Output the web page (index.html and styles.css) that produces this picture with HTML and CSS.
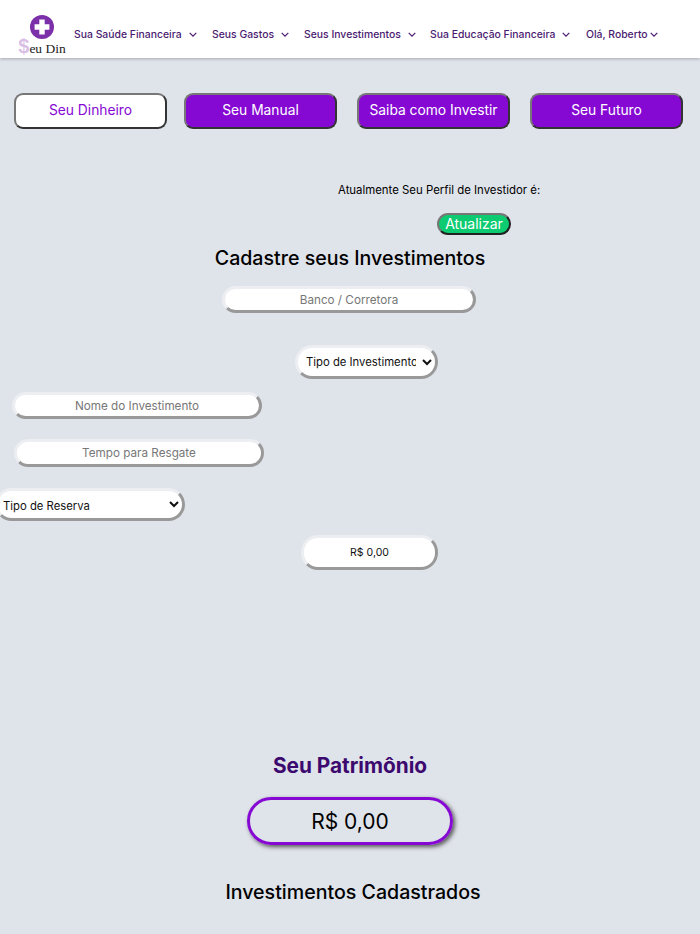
FILE: index.html

```html
<!DOCTYPE html>
<html lang="pt-BR">
<head>
  <meta charset="UTF-8">
  <title>Seu Din - Seus Investimentos</title>
  <link rel="stylesheet" href="styles.css">
</head>
<body>

<header class="topbar">
  <a class="logo" href="#">
    <svg class="logo-icon" viewBox="0 0 24 24" width="24" height="24">
      <circle cx="12" cy="12" r="12" fill="#7b2fa8"/>
      <path d="M9.3 4.6h5.4v4.7h4.7v5.4h-4.700v4.700H9.300v-4.700H4.600V9.300h4.700z" fill="#fff"/>
    </svg>
    <span class="logo-text"><span class="logo-cifrao">$</span>eu Din</span>
  </a>
  <nav class="menu">
    <a href="#" class="menu-item item-saude">Sua Saúde Financeira
      <svg class="chevron" viewBox="0 0 8 5"><path d="M.7.8 4 4.100 7.300.8"/></svg></a>
    <a href="#" class="menu-item item-gastos">Seus Gastos
      <svg class="chevron" viewBox="0 0 8 5"><path d="M.7.8 4 4.100 7.300.8"/></svg></a>
    <a href="#" class="menu-item item-invest">Seus Investimentos
      <svg class="chevron" viewBox="0 0 8 5"><path d="M.7.8 4 4.100 7.300.8"/></svg></a>
    <a href="#" class="menu-item item-edu">Sua Educação Financeira
      <svg class="chevron" viewBox="0 0 8 5"><path d="M.7.8 4 4.100 7.300.8"/></svg></a>
    <a href="#" class="menu-item item-user">Olá, Roberto
      <svg class="chevron" viewBox="0 0 8 5"><path d="M.7.8 4 4.100 7.300.8"/></svg></a>
  </nav>
</header>

<div class="tabs">
  <a href="#" class="tab tab-active">Seu Dinheiro</a>
  <a href="#" class="tab">Seu Manual</a>
  <a href="#" class="tab">Saiba como Investir</a>
  <a href="#" class="tab">Seu Futuro</a>
</div>

<p class="perfil">Atualmente Seu Perfil de Investidor é:</p>
<button class="btn-atualizar" type="button">Atualizar</button>

<h2 class="titulo">Cadastre seus Investimentos</h2>

<form class="cadastro">
  <input class="campo campo-banco" type="text" placeholder="Banco / Corretora">
  <select class="campo campo-tipo">
    <option>Tipo de Investimento</option>
  </select>
  <input class="campo campo-nome" type="text" placeholder="Nome do Investimento">
  <input class="campo campo-tempo" type="text" placeholder="Tempo para Resgate">
  <select class="campo campo-reserva">
    <option>Tipo de Reserva</option>
  </select>
  <input class="campo campo-valor" type="text" value="R$ 0,00">
</form>

<h2 class="patrimonio-titulo">Seu Patrimônio</h2>
<div class="patrimonio-valor">R$ 0,00</div>

<h2 class="titulo titulo-lista">Investimentos Cadastrados</h2>

</body>
</html>
```

FILE: styles.css

```css
body {
  margin: 0;
  height: 934px;
  overflow: hidden;
  background-color: #dfe3ea;
  font-family: Inter, "Noto Sans", sans-serif;
  color: #000;
}

/* topo */
.topbar {
  height: 58px;
  background-color: #fff;
  box-shadow: 0 1px 3px rgba(0,0,0,0.25);
  display: flex;
}
.logo {
  width: 74px;
  padding-top: 15px;
  box-sizing: border-box;
  display: flex;
  flex-direction: column;
  align-items: center;
  text-decoration: none;
}
.logo-icon { margin-left: 10px; flex: none; }
.logo-text {
  margin-left: 10px;
  margin-top: -2px;
  font-family: "Liberation Serif", serif;
  font-size: 13.5px;
  line-height: 19px;
  color: #222;
  white-space: nowrap;
}
.logo-cifrao {
  font-family: "Liberation Sans", sans-serif;
  font-weight: bold;
  font-size: 20px;
  color: #d9bfe6;
}
.menu {
  display: flex;
  align-items: center;
  padding-top: 10px;
  height: 48px;
}
.menu-item {
  display: flex;
  align-items: center;
  font-size: 10.4px;
  font-weight: 500;
  color: #4a1a70;
  text-decoration: none;
  white-space: nowrap;
}
.chevron {
  width: 8px;
  height: 5px;
  fill: none;
  stroke: #4a1a70;
  stroke-width: 1.2;
  margin-left: 7px;
}
.item-saude { width: 138px; }
.item-gastos { width: 92px; }
.item-invest { width: 126px; }
.item-edu { width: 156px; }
.item-user .chevron { margin-left: 2px; }

/* abas */
.tabs {
  display: flex;
  gap: 20px;
  padding: 35px 0 0 14px;
}
.tab {
  width: 153px;
  height: 36px;
  box-sizing: border-box;
  padding-bottom: 2px;
  display: flex;
  align-items: center;
  justify-content: center;
  background-color: #8609d3;
  color: #fff;
  font-size: 13.8px;
  text-decoration: none;
  border-radius: 9px;
  border: 2px solid;
  border-color: #777 #333 #333 #777;
  white-space: nowrap;
}
.tab-active {
  background-color: #fff;
  color: #8609d3;
  margin-right: -3px;
}

/* perfil */
.perfil {
  margin: 53px 0 0 338px;
  font-size: 11.4px;
  line-height: 16px;
}
.btn-atualizar {
  display: block;
  margin: 15px 0 0 437px;
  width: 74px;
  height: 22px;
  padding: 0 0 2px;
  background-color: #0ccb70;
  color: #fff;
  font-family: inherit;
  font-size: 14px;
  border-radius: 11px;
  border: 2px solid;
  border-color: #777 #222 #222 #777;
}

.titulo {
  margin: 10px 0 0;
  text-align: center;
  font-size: 19.6px;
  line-height: 26px;
  font-weight: 500;
}

/* formulario */
.cadastro {
  display: flex;
  flex-direction: column;
  align-items: flex-start;
}
.campo {
  box-sizing: border-box;
  display: block;
  padding: 0;
  background-color: #fff;
  border: 3px solid;
  border-color: #eceef1 #999 #999 #eceef1;
  border-radius: 14px;
  font-family: inherit;
  font-size: 11.7px;
  color: #111;
  text-align: center;
  outline: none;
}
.campo::placeholder { color: #777; opacity: 1; }
.campo-banco { margin: 15px 0 0 222px; width: 254px; height: 27px; }
.campo-tipo { margin: 32px 0 0 295px; width: 143px; height: 34px; border-radius: 17px; padding-left: 4px; padding-right: 3px; text-align: left; font-size: 11.3px; }
.campo-nome { margin: 13px 0 0 12px; width: 250px; height: 27px; }
.campo-tempo { margin: 20px 0 0 14px; width: 250px; height: 28px; }
.campo-reserva { margin: 21px 0 0 -5px; width: 190px; height: 33px; border-radius: 17px; padding-left: 1px; padding-top: 3px; text-align: left; font-size: 11.3px; }
.campo-valor { margin: 14px 0 0 301px; width: 137px; height: 35px; border-radius: 17px; font-size: 10.5px; }

/* patrimonio */
.patrimonio-titulo {
  margin: 183px 0 0;
  text-align: center;
  font-size: 20.8px;
  line-height: 26px;
  font-weight: 700;
  color: #3c0a6e;
}
.patrimonio-valor {
  box-sizing: border-box;
  width: 206px;
  height: 48px;
  margin: 18px auto 0;
  display: flex;
  align-items: center;
  justify-content: center;
  border: 3.5px solid #8609d3;
  border-radius: 24px;
  box-shadow: 2px 2px 4px #555;
  font-size: 21px;
}
.titulo-lista {
  margin: 34px 0 0 6px;
}
```
